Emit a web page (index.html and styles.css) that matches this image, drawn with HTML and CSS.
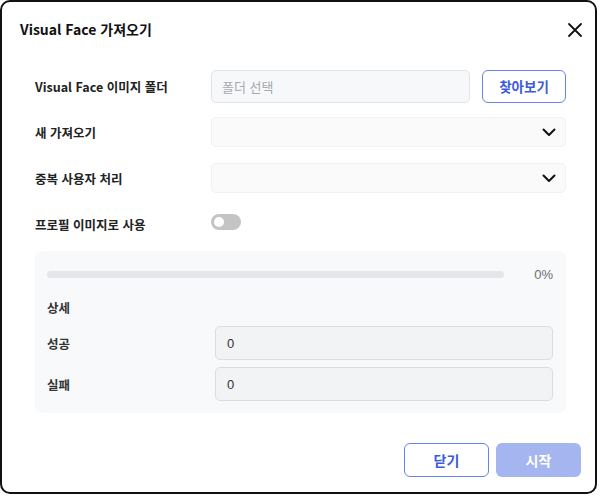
FILE: index.html
```html
<!DOCTYPE html>
<html lang="ko">
<head>
<meta charset="utf-8">
<title>Visual Face 가져오기</title>
<link rel="stylesheet" href="styles.css">
</head>
<body>
<div class="dialog">
  <div class="header">
    <h1 class="title">Visual Face 가져오기</h1>
    <button class="close" aria-label="닫기">
      <svg width="16" height="16" viewBox="0 0 16 16"><path d="M2 2 L14 14 M14 2 L2 14" stroke="#111" stroke-width="1.8" stroke-linecap="round" fill="none"/></svg>
    </button>
  </div>
  <div class="body">
    <div class="form">
      <div class="label">Visual Face 이미지 폴더</div>
      <div class="control folder">
        <div class="input-folder">폴더 선택</div>
        <button class="btn-outline browse">찾아보기</button>
      </div>
      <div class="label">새 가져오기</div>
      <div class="control">
        <div class="select"><svg class="chev" width="14" height="9" viewBox="0 0 14 9"><path d="M1.5 1.5 L7 7 L12.5 1.5" stroke="#111" stroke-width="2" fill="none" stroke-linecap="round" stroke-linejoin="round"/></svg></div>
      </div>
      <div class="label">중복 사용자 처리</div>
      <div class="control">
        <div class="select"><svg class="chev" width="14" height="9" viewBox="0 0 14 9"><path d="M1.5 1.5 L7 7 L12.5 1.5" stroke="#111" stroke-width="2" fill="none" stroke-linecap="round" stroke-linejoin="round"/></svg></div>
      </div>
      <div class="label">프로필 이미지로 사용</div>
      <div class="control">
        <div class="toggle"><span class="knob"></span></div>
      </div>
    </div>
    <div class="panel">
      <div class="progress-row">
        <div class="bar"></div>
        <span class="pct">0%</span>
      </div>
      <div class="detail-title">상세</div>
      <div class="detail">
        <div class="dlabel">성공</div>
        <div class="dinput">0</div>
        <div class="dlabel">실패</div>
        <div class="dinput">0</div>
      </div>
    </div>
  </div>
  <div class="footer">
    <button class="btn-outline fbtn">닫기</button>
    <button class="btn-primary fbtn">시작</button>
  </div>
</div>
</body>
</html>
```

FILE: styles.css
```css
* { box-sizing: border-box; }
html, body { margin: 0; padding: 0; background: #fff; }
body {
  font-family: "Noto Sans CJK KR", "Noto Sans", sans-serif;
  color: #222;
  width: 600px;
  height: 497px;
}
.dialog {
  width: 597px;
  height: 494px;
  border: 2px solid #111;
  border-radius: 10px;
  background: #fff;
  display: flex;
  flex-direction: column;
}
.header {
  display: flex;
  justify-content: space-between;
  align-items: flex-start;
  padding: 16px 12px 0 18px;
  height: 68px;
}
.title {
  margin: 0;
  font-size: 14px;
  font-weight: 700;
  line-height: 22px;
  color: #111;
}
.close {
  border: 0;
  background: none;
  padding: 0;
  width: 16px;
  height: 16px;
  margin-top: 4px;
  cursor: pointer;
}
.close svg { display: block; }
.body {
  padding: 0 29px 0 33px;
}
.form {
  display: grid;
  grid-template-columns: 176px 1fr;
  grid-auto-rows: 32px;
  row-gap: 14px;
  align-items: center;
}
.label {
  font-size: 12.5px;
  font-weight: 700;
  color: #222;
}
.control { height: 32px; display: flex; align-items: center; }
.folder { gap: 12px; }
.input-folder {
  flex: 1;
  height: 33px;
  border: 1px solid #e1e3e8;
  background: #f7f8fa;
  border-radius: 5px;
  font-size: 13px;
  color: #a6a9ae;
  display: flex;
  align-items: center;
  padding-left: 10px;
}
.btn-outline {
  font-family: inherit;
  border: 1.5px solid #6384f0;
  background: #fff;
  color: #3b5bdb;
  font-weight: 700;
  font-size: 13.5px;
  border-radius: 6px;
}
.browse { width: 84px; height: 33px; }
.select {
  flex: 1;
  height: 30px;
  border: 1px solid #f0f1f3;
  background: #fafafa;
  border-radius: 5px;
  display: flex;
  justify-content: flex-end;
  align-items: center;
  padding-right: 9px;
}
.chev { display: block; }
.toggle {
  width: 30px;
  height: 16px;
  border-radius: 8px;
  background: #c4c4c4;
  position: relative;
  margin-top: -4px;
}
.knob {
  position: absolute;
  left: 3px;
  top: 3px;
  width: 10px;
  height: 10px;
  border-radius: 50%;
  background: #fff;
}
.panel {
  margin-top: 11px;
  background: #f8f9fa;
  border-radius: 7px;
  padding: 16px 13px 12px 12px;
  height: 162px;
}
.progress-row {
  display: flex;
  align-items: center;
  gap: 30px;
  height: 15px;
}
.bar {
  flex: 1;
  height: 7px;
  border-radius: 4px;
  background: #e5e6e9;
}
.pct {
  font-size: 13px;
  color: #6b6e74;
  font-family: "Liberation Sans", "Noto Sans", sans-serif;
}
.detail-title {
  margin-top: 17px;
  font-size: 12.5px;
  font-weight: 700;
  color: #333;
  line-height: 18px;
}
.detail {
  margin-top: 9px;
  display: grid;
  grid-template-columns: 168px 1fr;
  grid-auto-rows: 34px;
  row-gap: 7px;
  align-items: center;
}
.dlabel {
  font-size: 12.5px;
  font-weight: 700;
  color: #333;
}
.dinput {
  height: 34px;
  background: #f2f3f5;
  border: 1px solid #dcdde0;
  border-radius: 5px;
  font-size: 13px;
  color: #333;
  display: flex;
  align-items: center;
  padding-left: 11px;
  font-family: "Liberation Sans", "Noto Sans", sans-serif;
}
.footer {
  margin-top: auto;
  display: flex;
  justify-content: flex-end;
  gap: 7px;
  padding: 0 14px 15px 0;
}
.fbtn { width: 85px; height: 34px; font-size: 14px; }
.btn-primary {
  font-family: inherit;
  border: 0;
  background: #a5b5f0;
  color: #fff;
  font-weight: 700;
  border-radius: 6px;
}
```
